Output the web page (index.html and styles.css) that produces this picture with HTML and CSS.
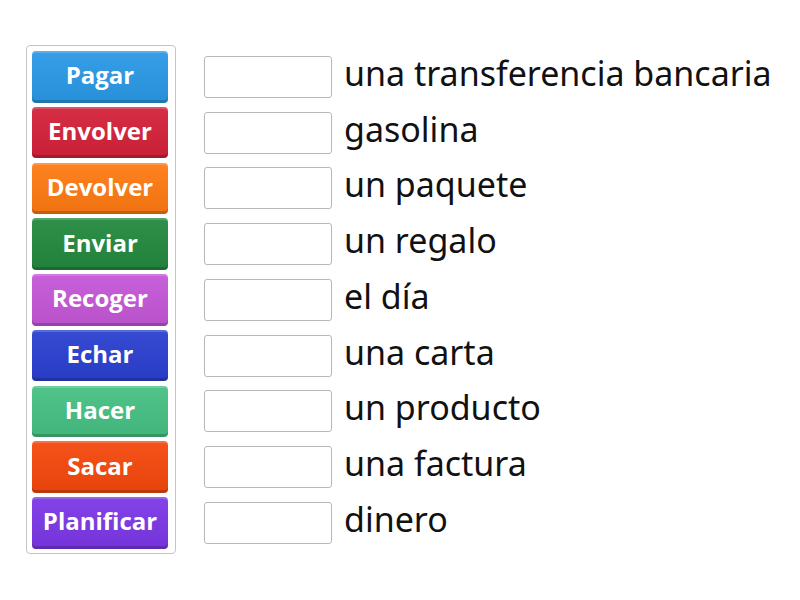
FILE: index.html
```html
<!DOCTYPE html>
<html lang="es">
<head>
    <meta charset="UTF-8">
    <title>Relacionar</title>
    <link rel="stylesheet" href="styles.css">
</head>
<body>
    <div class="game">
        <div class="cards">
            <div class="card c-blue">Pagar</div>
            <div class="card c-red">Envolver</div>
            <div class="card c-orange">Devolver</div>
            <div class="card c-green">Enviar</div>
            <div class="card c-pink">Recoger</div>
            <div class="card c-navy">Echar</div>
            <div class="card c-mint">Hacer</div>
            <div class="card c-flame">Sacar</div>
            <div class="card c-violet">Planificar</div>
        </div>
        <div class="rows">
            <div class="row"><span class="slot"></span><span class="label">una transferencia bancaria</span></div>
            <div class="row"><span class="slot"></span><span class="label">gasolina</span></div>
            <div class="row"><span class="slot"></span><span class="label">un paquete</span></div>
            <div class="row"><span class="slot"></span><span class="label">un regalo</span></div>
            <div class="row"><span class="slot"></span><span class="label">el día</span></div>
            <div class="row"><span class="slot"></span><span class="label">una carta</span></div>
            <div class="row"><span class="slot"></span><span class="label">un producto</span></div>
            <div class="row"><span class="slot"></span><span class="label">una factura</span></div>
            <div class="row"><span class="slot"></span><span class="label">dinero</span></div>
        </div>
    </div>
</body>
</html>
```
FILE: styles.css
```css
body {
    margin: 0;
    background: #fff;
    font-family: "Open Sans", "Liberation Sans", sans-serif;
}
.game {
    display: flex;
    align-items: flex-start;
    padding: 45px 0 0 26px;
}
.cards {
    width: 150px;
    border: 1px solid #c4c4c4;
    border-radius: 4px;
    padding: 5px 0 4px 5px;
    display: flex;
    flex-direction: column;
    gap: 4.25px;
    box-sizing: border-box;
}
.card {
    width: 136px;
    height: 51.5px;
    border-radius: 4px;
    color: #fff;
    font-weight: 700;
    font-size: 24px;
    display: flex;
    align-items: center;
    justify-content: center;
    box-sizing: border-box;
    box-shadow: inset 0 -3px 0 rgba(0, 0, 0, 0.18), inset 0 2px 0 rgba(255, 255, 255, 0.18);
    background-image: linear-gradient(rgba(255, 255, 255, 0.06), rgba(0, 0, 0, 0.06));
    padding-bottom: 4px;
}
.c-blue { background-color: #2a98e6; }
.c-red { background-color: #d4213a; }
.c-orange { background-color: #ff7a12; }
.c-green { background-color: #23893f; }
.c-pink { background-color: #c456d7; }
.c-navy { background-color: #2a3fd0; }
.c-mint { background-color: #46c083; }
.c-flame { background-color: #f4480c; }
.c-violet { background-color: #7b37e6; }
.rows {
    display: flex;
    flex-direction: column;
    margin-left: 28px;
    padding-top: 4px;
}
.row {
    height: 55.75px;
    display: flex;
    align-items: center;
}
.slot {
    width: 128px;
    height: 42px;
    border: 1px solid #b8b8b8;
    border-radius: 3px;
    box-sizing: border-box;
    flex: none;
}
.label {
    margin-left: 12px;
    font-family: "Noto Sans", "Open Sans", sans-serif;
    font-size: 34px;
    color: #111;
    white-space: nowrap;
    padding-bottom: 8px;
}
```
